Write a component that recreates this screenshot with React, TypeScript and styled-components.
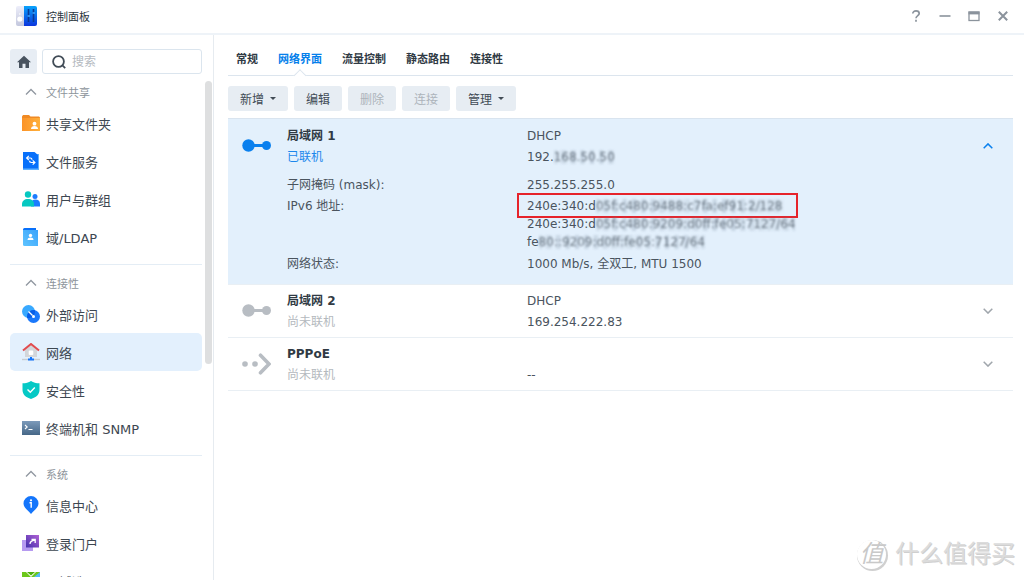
import React from 'react';
import styled, { createGlobalStyle, css } from 'styled-components';

const GlobalStyle = createGlobalStyle`
  * { box-sizing: border-box; }
  body {
    margin: 0;
    background: #fff;
    color: #4a545e;
    font-family: 'DejaVu Sans', 'Noto Sans CJK SC', sans-serif;
    font-size: 12px;
  }
  button, input { font: inherit; color: inherit; }
  button { border: 0; padding: 0; background: none; cursor: pointer; }
  svg { display: block; flex: none; }
  ul, dl, dd, h1, h2, h3, p { margin: 0; padding: 0; font-size: inherit; font-weight: inherit; }
  ul { list-style: none; }
`;

const Window = styled.div`
  position: relative;
  display: flex;
  flex-direction: column;
  height: 100vh;
  overflow: hidden;
`;

const TitleBar = styled.header`
  display: flex;
  align-items: center;
  flex: none;
  height: 35px;
  padding: 0 7px 2px 15px;
  border-bottom: 2px solid #eef3f8;
`;

const WindowTitle = styled.h1`
  flex: 1;
  margin-left: 9px;
  font-size: 11px;
  color: #2c3640;
`;

const WindowButton = styled.button`
  display: grid;
  place-items: center;
  width: 29px;
  height: 28px;
`;

const Body = styled.div`
  display: flex;
  flex: 1;
  min-height: 0;
`;

const Sidebar = styled.aside`
  display: flex;
  flex-direction: column;
  flex: none;
  width: 214px;
  padding: 14px 0 3px 10px;
  border-right: 1px solid #e6ebf0;
`;

const SearchRow = styled.div`
  display: flex;
  flex: none;
  gap: 5px;
  padding-right: 11px;
`;

const HomeButton = styled.button`
  display: grid;
  place-items: center;
  width: 27px;
  height: 25px;
  border-radius: 3px;
  background: #e7edf4;
`;

const SearchBox = styled.label`
  display: flex;
  flex: 1;
  align-items: center;
  gap: 6px;
  min-width: 0;
  height: 25px;
  padding: 0 9px;
  border: 1px solid #dbe5ee;
  border-radius: 3px;
`;

const SearchInput = styled.input`
  flex: 1;
  min-width: 0;
  border: 0;
  padding: 0;
  outline: none;
  background: none;
  &::placeholder { color: #b5babf; opacity: 1; }
`;

const NavArea = styled.div`
  display: flex;
  flex: 1;
  min-height: 0;
  padding-top: 5px;
`;

const NavScroll = styled.nav`
  flex: 1;
  overflow: hidden;
  margin-right: 3px;
`;

const ScrollTrack = styled.div`
  width: 8px;
  padding-top: 2px;
`;

const ScrollThumb = styled.div`
  width: 7px;
  height: 57%;
  border-radius: 4px;
  background: #dedfe0;
`;

const NavGroup = styled.section`
  padding-bottom: 8px;
  & + & {
    padding-top: 5px;
    border-top: 1px solid #e4edf5;
  }
`;

const GroupHeading = styled.button`
  display: flex;
  align-items: center;
  gap: 6px;
  width: 100%;
  height: 25px;
  padding-left: 12px;
  color: #8d949b;
  font-size: 11px;
`;

const NavLink = styled.a<{ $active?: boolean }>`
  display: flex;
  align-items: center;
  gap: 6px;
  height: 38px;
  padding-left: 12px;
  border-radius: 5px;
  color: #3d4751;
  font-size: 13px;
  text-decoration: none;
  background: ${(p) => (p.$active ? '#e3f0fd' : 'transparent')};
`;

const Main = styled.main`
  flex: 1;
  min-width: 0;
  padding: 8px 11px 0 14px;
`;

const Tabs = styled.div`
  display: flex;
  gap: 20px;
  height: 33px;
  padding-left: 8px;
  border-bottom: 1px solid #dce5ee;
`;

const Tab = styled.button<{ $active?: boolean }>`
  position: relative;
  height: 30px;
  font-size: 11px;
  font-weight: bold;
  color: ${(p) => (p.$active ? '#057feb' : '#303a44')};
  ${(p) =>
    p.$active &&
    css`
      &::after {
        content: '';
        position: absolute;
        left: 50%;
        bottom: -7px;
        width: 8px;
        height: 8px;
        border: solid #dce5ee;
        border-width: 1px 0 0 1px;
        background: #fff;
        transform: translateX(-50%) rotate(45deg);
      }
    `}
`;

const Toolbar = styled.div`
  display: flex;
  gap: 6px;
  padding: 10px 0 7px;
`;

const ToolButton = styled.button`
  display: flex;
  align-items: center;
  justify-content: center;
  gap: 6px;
  height: 25px;
  padding: 0 12px;
  border-radius: 3px;
  background: #e7edf3;
  color: #414b55;
  &:disabled { color: #adb4bb; cursor: default; }
`;

const Caret = styled.span`
  border: 3px solid transparent;
  border-top-color: currentColor;
  border-bottom: 0;
`;

const Interfaces = styled.ul`
  border-top: 1px solid #d9e4ef;
`;

const InterfaceRow = styled.li<{ $open?: boolean }>`
  display: grid;
  grid-template-columns: 59px 1fr 51px;
  padding: ${(p) => (p.$open ? '7px 0 9px' : '6px 0 4px')};
  border-bottom: 1px solid #e9eff4;
  line-height: 21px;
  background: ${(p) => (p.$open ? '#e3f0fc' : '#fff')};
`;

const RowIcon = styled.div`
  display: flex;
  align-items: center;
  height: 39px;
  padding-left: 14px;
`;

const Expand = styled.button`
  display: grid;
  place-items: center;
  height: 39px;
`;

const Pair = styled.div`
  display: grid;
  grid-template-columns: 240px 1fr;
`;

const Name = styled.h2`
  font-weight: bold;
  color: #303a44;
`;

const Status = styled.p<{ $on?: boolean }>`
  color: ${(p) => (p.$on ? '#1c87ec' : '#b4b9be')};
`;

const Details = styled.dl`
  margin-top: 7px;
`;

const AddressList = styled.dd`
  padding: 1px 0 3px;
  line-height: 18px;
`;

const Address = styled.div<{ $marked?: boolean }>`
  position: relative;
  width: 271px;
  white-space: nowrap;
  ${(p) =>
    p.$marked &&
    css`
      &::after {
        content: '';
        position: absolute;
        inset: -4px 0 -3px -10px;
        border: 2px solid #e6232b;
      }
    `}
`;

const Masked = styled.span`
  padding: 1px 0;
  color: #687480;
  background:
    repeating-linear-gradient(90deg, rgba(120, 140, 160, 0.16) 0 4px, transparent 4px 9px),
    repeating-linear-gradient(90deg, transparent 0 6px, rgba(120, 140, 160, 0.12) 6px 10px);
  background-clip: content-box;
  filter: blur(1px);
`;

const Watermark = styled.div`
  position: absolute;
  right: 9px;
  bottom: 8px;
  display: flex;
  align-items: center;
  gap: 9px;
  color: #dcdcdc;
  font-size: 24px;
  line-height: 36px;
  text-shadow: 1px 1px 0 #cfcfcf;
  pointer-events: none;
`;

const WatermarkSeal = styled.span`
  display: grid;
  place-items: center;
  width: 29px;
  height: 29px;
  border-radius: 50%;
  box-shadow: 1px 1px 0 1px #d0d0d0;
  background: #fff;
  font-size: 24px;
  font-style: italic;
  line-height: 28px;
  color: #c9c9c9;
  text-shadow: none;
`;

const PanelLogo = () => (
  <svg width="22" height="22" viewBox="0 0 22 22">
    <defs>
      <linearGradient id="logoBlue" x1="0" y1="0" x2="0" y2="1">
        <stop stopColor="#08a2fb" /><stop offset="1" stopColor="#0b35dd" />
      </linearGradient>
      <linearGradient id="logoGrey" x1="0" y1="0" x2="0" y2="1">
        <stop stopColor="#edeefa" /><stop offset="1" stopColor="#c3c7dd" />
      </linearGradient>
    </defs>
    <path d="M3 1h7v20H3a2 2 0 0 1-2-2V3a2 2 0 0 1 2-2z" fill="url(#logoGrey)" />
    <path d="M9 1h11a2 2 0 0 1 2 2v16a2 2 0 0 1-2 2H9z" fill="url(#logoBlue)" />
    <circle cx="4.800" cy="14" r="2.600" fill="#fff" /><circle cx="4.800" cy="9" r=".8" fill="#fff" />
    <path d="M13.500 4v13M18.500 4v13" stroke="#0a3995" strokeWidth="1.600" />
    <path d="M12.500 11h2.500M17.500 8h2.500" stroke="#39a5ff" strokeWidth="1.600" />
  </svg>
);

const Chevron = ({ up, color = '#a0a6ac' }: { up?: boolean; color?: string }) => (
  <svg width="10" height="6" viewBox="0 0 10 6" fill="none" stroke={color} strokeWidth="1.500">
    <path d={up ? 'M.7 5.200 5 .9l4.300 4.300' : 'M.7.8 5 5.100 9.300.8'} />
  </svg>
);

const GroupChevron = () => (
  <svg width="18" height="8" viewBox="0 0 18 8" fill="none" stroke="#9097a0" strokeWidth="1.300">
    <path d="M4 6.500 9 1.500l5 5" />
  </svg>
);

const icons: Record<string, React.ReactNode> = {
  folder: (
    <>
      <path d="M0 2.500 1 1h6l1.500 1.500H17l1 1V17H0z" fill="#f08a24" />
      <path d="M0 4h18v13H0z" fill="url(#navOrange)" />
      <circle cx="12.500" cy="9.700" r="1.900" fill="#fff" /><path d="M9 15c0-2 1.500-3 3.500-3s3.500 1 3.500 3z" fill="#fff" />
    </>
  ),
  files: (
    <>
      <path d="M1 2h16v16H1z" fill="#61b2ff" /><path d="M1 0h11.500L16 3v13.500H1z" fill="#0870fa" />
      <path d="M6.800 3.800 4.600 6l2.200 2.200M4.800 6h3.400c1.200 0 1.800.7 1.800 1.700M10.700 8.300l2.200 2.200-2.200 2.200M12.700 10.500H9.300c-1.200 0-1.800-.7-1.800-1.700" fill="none" stroke="#fff" strokeWidth="1.200" />
    </>
  ),
  users: (
    <>
      <circle cx="13" cy="6.500" r="2.500" fill="#1b7cff" /><path d="M9 16.500v-3c0-2.500 2-4 4.500-4S18 11 18 13.500v3z" fill="#1b7cff" />
      <circle cx="6" cy="4.500" r="3.200" fill="#06c8c1" /><path d="M0 16.500V14c0-3 2.500-5 6-5s6 2 6 5v2.500z" fill="#06c8c1" />
    </>
  ),
  ldap: (
    <>
      <path d="M1 1.500A1.500 1.500 0 0 1 2.500 0H14v3H1z" fill="#0870fa" /><path d="M1 2h15v16H2.500A1.500 1.500 0 0 1 1 16.500z" fill="url(#navSky)" />
      <circle cx="8.500" cy="7.500" r="1.700" fill="#fff" /><path d="M5.500 12c0-1.700 1.200-2.500 3-2.500s3 .8 3 2.500z" fill="#fff" />
    </>
  ),
  external: (
    <>
      <circle cx="6.500" cy="6.500" r="6.500" fill="#38a9ff" /><circle cx="11.500" cy="11.500" r="6.500" fill="#1a78fb" />
      <path d="M11.500 5a6.500 6.500 0 0 0-6.500 6.500c0 .5 0 1 .1 1.400A6.500 6.500 0 0 0 12.900 5.100z" fill="#075ee8" />
      <path d="m6.500 6.500 4 4" stroke="#fff" strokeWidth="1.200" /><circle cx="11.500" cy="11.500" r="1.500" fill="#fff" />
    </>
  ),
  network: (
    <>
      <path d="M3 7 9 2l6 5v7H3z" fill="#d3d6da" /><rect x="6.700" y="7.500" width="4.600" height="4.500" rx="1" fill="#fff" />
      <path d="M1 7.500 9 1l8 6.500" fill="none" stroke="#e14b4e" strokeWidth="2" />
      <path d="M0 16.500h18" stroke="#c7ccd2" strokeWidth="1.400" /><path d="M9 14v2.500M6 16.500h6" stroke="#1475fb" strokeWidth="2" />
    </>
  ),
  security: (
    <>
      <path d="M9 0c2.500 1.500 5 2.300 8.500 2.300V9c0 4.500-3.500 7.500-8.500 9C4 16.500.5 13.500.5 9V2.300C4 2.300 6.500 1.500 9 0z" fill="#05c9c5" />
      <path d="m5.500 8.500 2.800 2.800 4.500-4.800" fill="none" stroke="#fff" strokeWidth="1.400" />
    </>
  ),
  terminal: (
    <>
      <path d="M0 2h18v14H0z" fill="url(#navSlate)" />
      <path d="m3 6 2.200 2L3 10M6.500 10.500h4" fill="none" stroke="#fff" strokeWidth="1.100" />
    </>
  ),
  info: (
    <>
      <path d="M9 0a7.500 7.500 0 0 1 7.500 7.500c0 4.500-5 7-7.500 10.500C6.500 14.500 1.500 12 1.500 7.500A7.500 7.500 0 0 1 9 0z" fill="#1475fb" />
      <circle cx="9" cy="4.300" r="1.100" fill="#fff" /><path d="M7.500 6.800h1.700v5" fill="none" stroke="#fff" strokeWidth="1.400" />
    </>
  ),
  portal: (
    <>
      <path d="M0 6h11v11H0z" fill="#b69af0" /><path d="M4 1h13v12.500H4z" fill="url(#navPurple)" />
      <path d="M8 10c0-2 2-3.500 4.500-4M9.500 5.300h3.700V9" fill="none" stroke="#fff" strokeWidth="1.300" />
    </>
  ),
  region: (
    <>
      <path d="M0 0h18v18H0z" fill="#6cc71a" /><path d="m4 0 5 5 5-5z" fill="#fff" /><path d="m5 0 4 3.500L13 0z" fill="#4daf0c" /><path d="m12 5 6-5v18h-6z" fill="#55b9f5" />
    </>
  ),
};

const NavIcon = ({ name }: { name: string }) => (
  <svg width="18" height="18" viewBox="0 0 18 18" aria-hidden="true">
    {icons[name]}
  </svg>
);

const Gradients = () => (
  <svg width="0" height="0" aria-hidden="true">
    <defs>
      <linearGradient id="navOrange"><stop stopColor="#fb9328" /><stop offset="1" stopColor="#ffb03c" /></linearGradient>
      <linearGradient id="navSky" x1="0" y1="1" x2="1" y2="0"><stop stopColor="#5fc4ff" /><stop offset="1" stopColor="#39a3fb" /></linearGradient>
      <linearGradient id="navSlate" x1="0" y1="0" x2="0" y2="1"><stop stopColor="#7c9aba" /><stop offset="1" stopColor="#466787" /></linearGradient>
      <linearGradient id="navPurple" x1="0" y1="1" x2="1" y2="0"><stop stopColor="#4430ad" /><stop offset="1" stopColor="#b061d4" /></linearGradient>
    </defs>
  </svg>
);

const LinkIcon = ({ color }: { color: string }) => (
  <svg width="29" height="13" viewBox="0 0 29 13" fill={color}>
    <circle cx="6.500" cy="6.500" r="6.200" /><circle cx="24.500" cy="6.500" r="4.500" /><path d="M10 5h12v3H10z" />
  </svg>
);

const PppoeIcon = () => (
  <svg width="29" height="22" viewBox="0 0 29 22" fill="#b8bdc3">
    <circle cx="3" cy="11" r="2.800" /><circle cx="13" cy="11" r="2.800" />
    <path d="m18.500 2.200 8.500 8.800-8.500 8.800" fill="none" stroke="#b8bdc3" strokeWidth="3.600" strokeLinecap="round" />
  </svg>
);

const groups = [
  { title: '文件共享', items: [['folder', '共享文件夹'], ['files', '文件服务'], ['users', '用户与群组'], ['ldap', '域/LDAP']] },
  { title: '连接性', items: [['external', '外部访问'], ['network', '网络'], ['security', '安全性'], ['terminal', '终端机和 SNMP']] },
  { title: '系统', items: [['info', '信息中心'], ['portal', '登录门户'], ['region', '区域选项']] },
];

const tabs = ['常规', '网络界面', '流量控制', '静态路由', '连接性'];

const tools = [
  { label: '新增', menu: true },
  { label: '编辑' },
  { label: '删除', disabled: true },
  { label: '连接', disabled: true },
  { label: '管理', menu: true },
];

export default function App() {
  return (
    <Window>
      <GlobalStyle />
      <TitleBar>
        <PanelLogo />
        <WindowTitle>控制面板</WindowTitle>
        <WindowButton aria-label="帮助">
          <svg width="10" height="12" viewBox="0 0 10 12" fill="none" stroke="#8b939c" strokeWidth="1.700">
            <path d="M1.800 3.500C1.800 1.800 3.200.9 5 .9s3.200 1 3.200 2.600C8.200 5.600 5 5.600 5 8.300M5 9.800v1.900" />
          </svg>
        </WindowButton>
        <WindowButton aria-label="最小化">
          <svg width="12" height="12" viewBox="0 0 12 12"><path d="M.5 5.200h11v1.600H.5z" fill="#8b939c" /></svg>
        </WindowButton>
        <WindowButton aria-label="最大化">
          <svg width="12" height="12" viewBox="0 0 12 12" fill="none" stroke="#8b939c">
            <rect x="1" y="2" width="10" height="8.500" strokeWidth="1.300" /><path d="M.5 3h11" strokeWidth="2.800" />
          </svg>
        </WindowButton>
        <WindowButton aria-label="关闭">
          <svg width="12" height="12" viewBox="0 0 12 12" stroke="#8b939c" strokeWidth="2"><path d="m1.800 1.800 8.400 8.400M10.200 1.800l-8.400 8.400" /></svg>
        </WindowButton>
      </TitleBar>
      <Body>
        <Sidebar>
          <SearchRow>
            <HomeButton aria-label="主页">
              <svg width="14" height="14" viewBox="0 0 14 14" fill="#48535f">
                <path d="M7 .8 0 7.300h2V13h3.500V8.700h3V13H12V7.300h2z" />
              </svg>
            </HomeButton>
            <SearchBox>
              <svg width="14" height="14" viewBox="0 0 14 14" fill="none" stroke="#414c57" strokeWidth="1.800">
                <circle cx="6.500" cy="6.500" r="5.400" /><path d="m10.200 10.200 3 3" />
              </svg>
              <SearchInput type="search" placeholder="搜索" aria-label="搜索" />
            </SearchBox>
          </SearchRow>
          <NavArea>
            <NavScroll>
              {groups.map((group) => (
                <NavGroup key={group.title}>
                  <GroupHeading><GroupChevron />{group.title}</GroupHeading>
                  {group.items.map(([icon, label]) => (
                    <NavLink key={label} href="#" $active={icon === 'network'}>
                      <NavIcon name={icon} />{label}
                    </NavLink>
                  ))}
                </NavGroup>
              ))}
            </NavScroll>
            <ScrollTrack><ScrollThumb /></ScrollTrack>
          </NavArea>
        </Sidebar>
        <Main>
          <Tabs role="tablist">
            {tabs.map((tab, i) => (
              <Tab key={tab} role="tab" aria-selected={i === 1} $active={i === 1}>{tab}</Tab>
            ))}
          </Tabs>
          <Toolbar>
            {tools.map((tool) => (
              <ToolButton key={tool.label} disabled={tool.disabled}>
                {tool.label}
                {tool.menu && <Caret />}
              </ToolButton>
            ))}
          </Toolbar>
          <Interfaces>
            <InterfaceRow $open>
              <RowIcon><LinkIcon color="#0a80ee" /></RowIcon>
              <div>
                <Pair><Name>局域网 1</Name><span>DHCP</span></Pair>
                <Pair><Status $on>已联机</Status><span>192.<Masked>168.50.50</Masked></span></Pair>
                <Details>
                  <Pair><dt>子网掩码 (mask):</dt><dd>255.255.255.0</dd></Pair>
                  <Pair>
                    <dt>IPv6 地址:</dt>
                    <AddressList>
                      <Address $marked>240e:340:d<Masked>05f:c480:9488:c7fa:ef91:2/128</Masked></Address>
                      <Address>240e:340:d<Masked>05f:c480:9209:d0ff:fe05:7127/64</Masked></Address>
                      <Address>fe<Masked>80::9209:d0ff:fe05:7127/64</Masked></Address>
                    </AddressList>
                  </Pair>
                  <Pair><dt>网络状态:</dt><dd>1000 Mb/s, 全双工, MTU 1500</dd></Pair>
                </Details>
              </div>
              <Expand aria-label="收起"><Chevron up color="#0a80ee" /></Expand>
            </InterfaceRow>
            <InterfaceRow>
              <RowIcon><LinkIcon color="#b8bdc3" /></RowIcon>
              <div>
                <Pair><Name>局域网 2</Name><span>DHCP</span></Pair>
                <Pair><Status>尚未联机</Status><span>169.254.222.83</span></Pair>
              </div>
              <Expand aria-label="展开"><Chevron /></Expand>
            </InterfaceRow>
            <InterfaceRow>
              <RowIcon><PppoeIcon /></RowIcon>
              <div>
                <Pair><Name>PPPoE</Name></Pair>
                <Pair><Status>尚未联机</Status><span>--</span></Pair>
              </div>
              <Expand aria-label="展开"><Chevron /></Expand>
            </InterfaceRow>
          </Interfaces>
        </Main>
      </Body>
      <Watermark><WatermarkSeal>值</WatermarkSeal>什么值得买</Watermark>
      <Gradients />
    </Window>
  );
}
